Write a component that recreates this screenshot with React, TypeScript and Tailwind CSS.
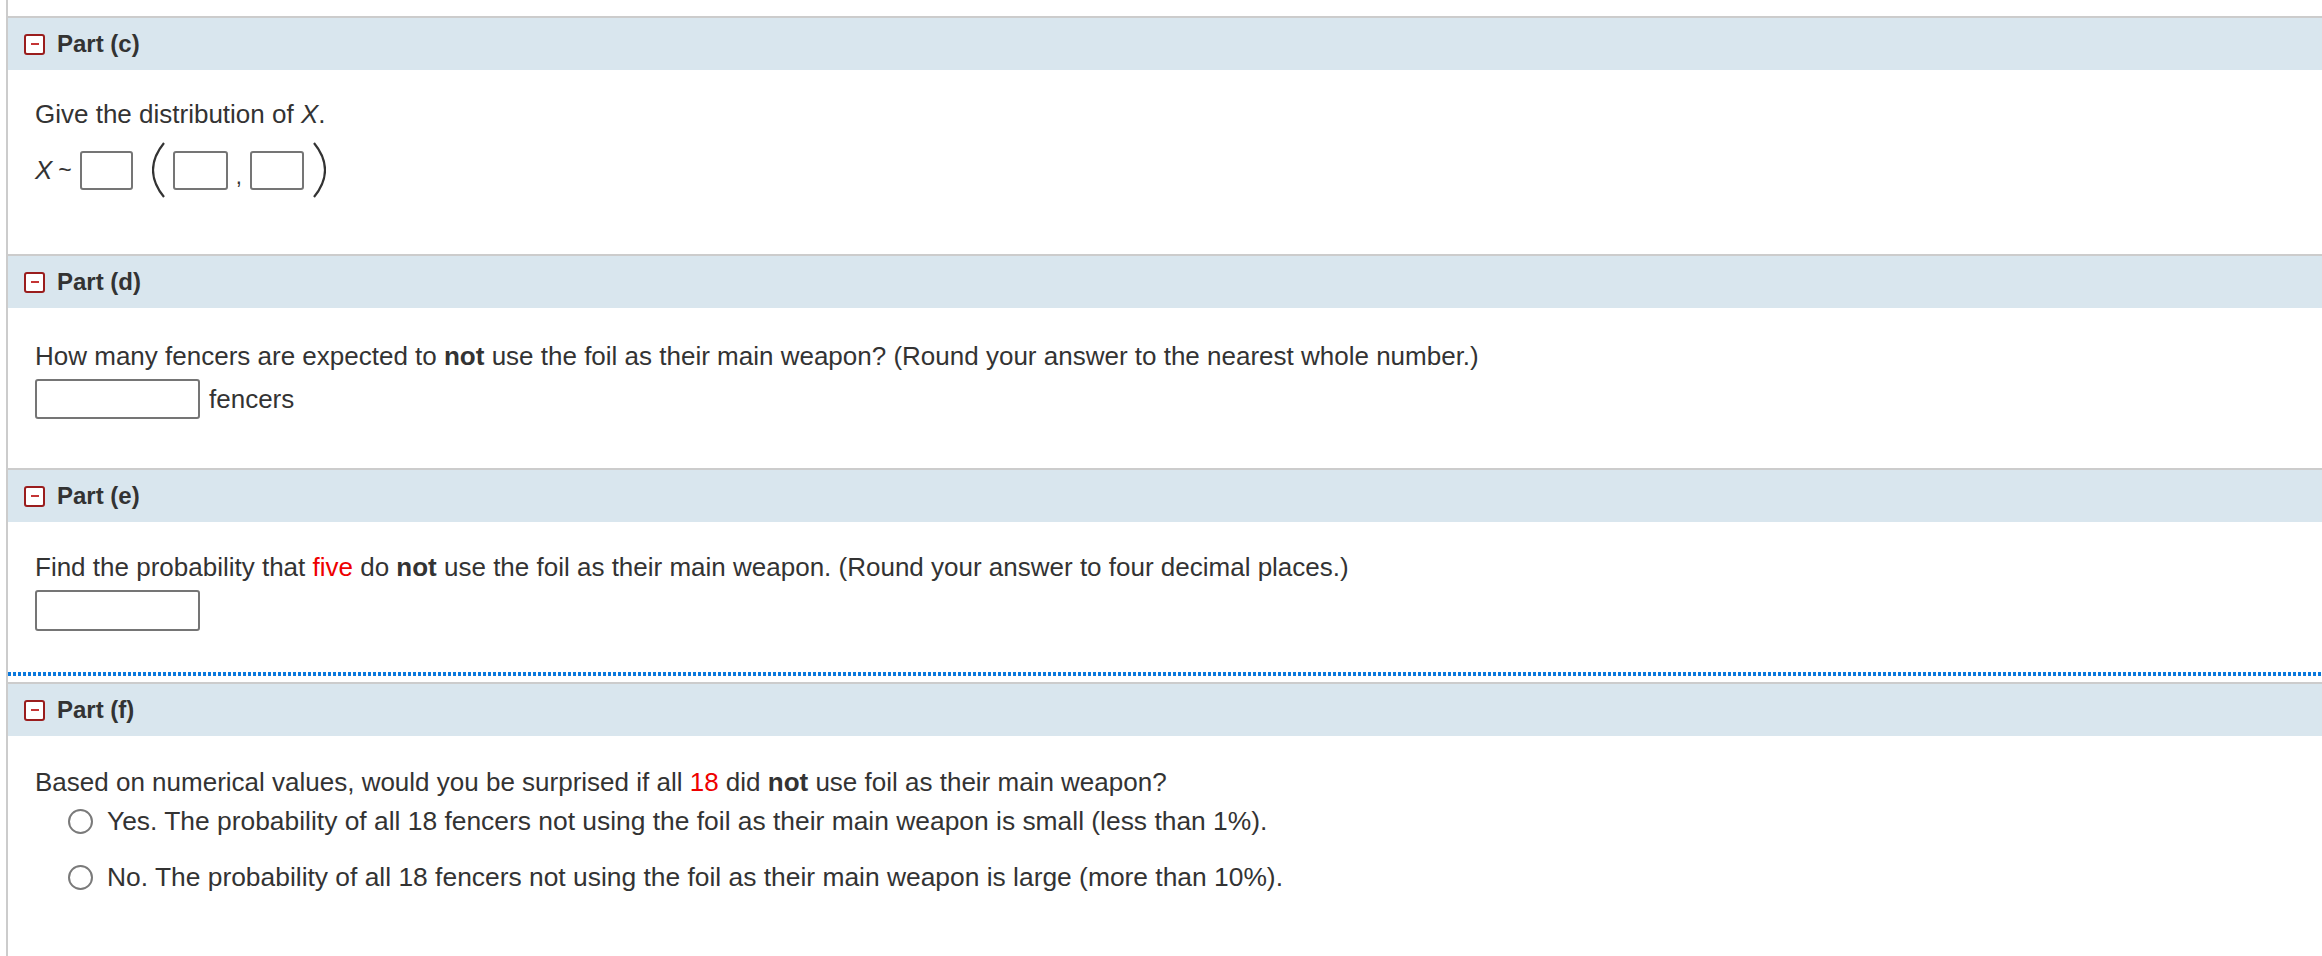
import React from 'react';

function CollapseIcon() {
  return (
    <span className="flex h-[21px] w-[21px] shrink-0 items-center justify-center rounded-[3px] border-2 border-[#9a1d1d] bg-white">
      <span className="block h-[2px] w-[8px] bg-[#c43434]" />
    </span>
  );
}

function PartHeader({ label }: { label: string }) {
  return (
    <div className="flex h-[54px] items-center gap-[12px] border-t-2 border-[#cccccc] bg-[#d9e6ee] pl-[16px]">
      <CollapseIcon />
      <span className="text-[24px] font-bold text-[#333333]">{label}</span>
    </div>
  );
}

function Box({ className }: { className: string }) {
  return <div className={`rounded-[3px] border-2 border-[#757575] bg-white ${className}`} />;
}

function Paren({ flip }: { flip?: boolean }) {
  return (
    <svg width="14" height="56" viewBox="0 0 14 56" className={flip ? '-scale-x-100' : ''}>
      <path d="M12 1 C3 12 1 22 1 28 C1 34 3 44 12 55" fill="none" stroke="#333" strokeWidth="2.2" />
    </svg>
  );
}

function Radio({ text }: { text: string }) {
  return (
    <div className="flex items-center gap-[14px]">
      <span className="block h-[25px] w-[25px] shrink-0 rounded-full border-2 border-[#7a7a7a] bg-white" />
      <span className="text-[26.4px] leading-[30px]">{text}</span>
    </div>
  );
}

export default function App() {
  return (
    <div
      className="min-h-[956px] w-full bg-white text-[26px] text-[#333333]"
      style={{ fontFamily: '"Liberation Sans", Arial, sans-serif' }}
    >
      <div className="ml-[6px] min-h-[956px] border-l-2 border-[#cccccc] pt-[16px]">
        {/* Part (c) */}
        <PartHeader label="Part (c)" />
        <div className="h-[184px] pl-[27px] pt-[30px]">
          <p className="leading-[28px]">
            Give the distribution of <i>X</i>.
          </p>
          <div className="mt-[14px] flex items-center leading-[30px]">
            <span className="italic">X</span>
            <span className="ml-[6px] mr-[8px] text-[23px]">~</span>
            <Box className="h-[39px] w-[53px]" />
            <span className="ml-[19px] mr-[7px] flex items-center">
              <Paren />
            </span>
            <Box className="h-[39px] w-[55px]" />
            <span className="mx-[8px] mt-[14px] text-[22px]">,</span>
            <Box className="h-[39px] w-[54px]" />
            <span className="ml-[8px] flex items-center">
              <Paren flip />
            </span>
          </div>
        </div>

        {/* Part (d) */}
        <PartHeader label="Part (d)" />
        <div className="h-[160px] pl-[27px] pt-[34px]">
          <p className="leading-[28px]">
            How many fencers are expected to <b>not</b> use the foil as their main weapon? (Round your answer to the nearest whole number.)
          </p>
          <div className="mt-[9px] flex items-center gap-[9px] leading-[30px]">
            <Box className="h-[40px] w-[165px]" />
            <span>fencers</span>
          </div>
        </div>

        {/* Part (e) */}
        <PartHeader label="Part (e)" />
        <div className="h-[150px] pl-[27px] pt-[31px]">
          <p className="leading-[28px]">
            Find the probability that <span className="text-[#ee0000]">five</span> do <b>not</b> use the foil as their main weapon. (Round your answer to four decimal places.)
          </p>
          <Box className="mt-[9px] h-[41px] w-[165px]" />
        </div>
        <div className="h-[4px] bg-[repeating-linear-gradient(90deg,#0a78dc_0px,#0a78dc_3px,transparent_3px,transparent_5px)]" />
        <div className="h-[6px]" />

        {/* Part (f) */}
        <PartHeader label="Part (f)" />
        <div className="pl-[27px] pt-[32px]">
          <p className="leading-[28px]">
            Based on numerical values, would you be surprised if all <span className="text-[#ee0000]">18</span> did <b>not</b> use foil as their main weapon?
          </p>
          <div className="mt-[10px] flex flex-col gap-[26px] pl-[33px]">
            <Radio text="Yes. The probability of all 18 fencers not using the foil as their main weapon is small (less than 1%)." />
            <Radio text="No. The probability of all 18 fencers not using the foil as their main weapon is large (more than 10%)." />
          </div>
        </div>
      </div>
    </div>
  );
}
